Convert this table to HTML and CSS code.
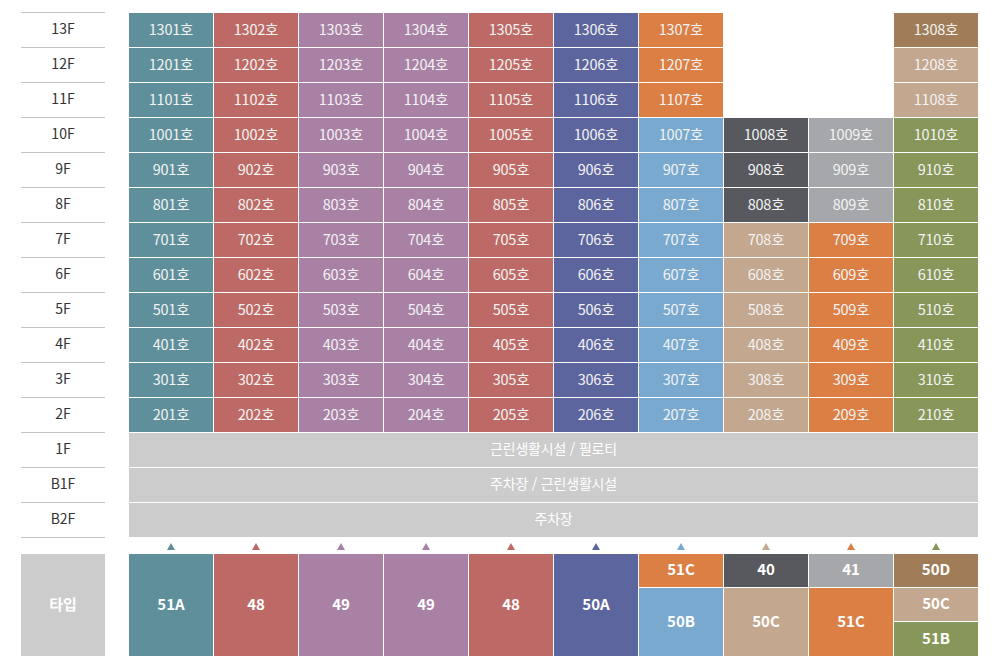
FILE: index.html
```html
<!DOCTYPE html>
<html lang="ko">
<head>
<meta charset="utf-8">
<title>호실 배치도</title>
<link rel="stylesheet" href="styles.css">
</head>
<body>
<div class="page">
  <div class="top">
    <div class="floors">
      <div class="floor">13F</div>
      <div class="floor">12F</div>
      <div class="floor">11F</div>
      <div class="floor">10F</div>
      <div class="floor">9F</div>
      <div class="floor">8F</div>
      <div class="floor">7F</div>
      <div class="floor">6F</div>
      <div class="floor">5F</div>
      <div class="floor">4F</div>
      <div class="floor">3F</div>
      <div class="floor">2F</div>
      <div class="floor">1F</div>
      <div class="floor">B1F</div>
      <div class="floor">B2F</div>
    </div>
    <div class="plan">
      <div class="c teal">1301호</div><div class="c red">1302호</div><div class="c purple">1303호</div><div class="c purple">1304호</div><div class="c red">1305호</div><div class="c navy">1306호</div><div class="c orange">1307호</div><div class="c empty"></div><div class="c brown">1308호</div>
      <div class="c teal">1201호</div><div class="c red">1202호</div><div class="c purple">1203호</div><div class="c purple">1204호</div><div class="c red">1205호</div><div class="c navy">1206호</div><div class="c orange">1207호</div><div class="c empty"></div><div class="c tan">1208호</div>
      <div class="c teal">1101호</div><div class="c red">1102호</div><div class="c purple">1103호</div><div class="c purple">1104호</div><div class="c red">1105호</div><div class="c navy">1106호</div><div class="c orange">1107호</div><div class="c empty"></div><div class="c tan">1108호</div>
      <div class="c teal">1001호</div><div class="c red">1002호</div><div class="c purple">1003호</div><div class="c purple">1004호</div><div class="c red">1005호</div><div class="c navy">1006호</div><div class="c blue">1007호</div><div class="c dark">1008호</div><div class="c light">1009호</div><div class="c olive">1010호</div>
      <div class="c teal">901호</div><div class="c red">902호</div><div class="c purple">903호</div><div class="c purple">904호</div><div class="c red">905호</div><div class="c navy">906호</div><div class="c blue">907호</div><div class="c dark">908호</div><div class="c light">909호</div><div class="c olive">910호</div>
      <div class="c teal">801호</div><div class="c red">802호</div><div class="c purple">803호</div><div class="c purple">804호</div><div class="c red">805호</div><div class="c navy">806호</div><div class="c blue">807호</div><div class="c dark">808호</div><div class="c light">809호</div><div class="c olive">810호</div>
      <div class="c teal">701호</div><div class="c red">702호</div><div class="c purple">703호</div><div class="c purple">704호</div><div class="c red">705호</div><div class="c navy">706호</div><div class="c blue">707호</div><div class="c tan">708호</div><div class="c orange">709호</div><div class="c olive">710호</div>
      <div class="c teal">601호</div><div class="c red">602호</div><div class="c purple">603호</div><div class="c purple">604호</div><div class="c red">605호</div><div class="c navy">606호</div><div class="c blue">607호</div><div class="c tan">608호</div><div class="c orange">609호</div><div class="c olive">610호</div>
      <div class="c teal">501호</div><div class="c red">502호</div><div class="c purple">503호</div><div class="c purple">504호</div><div class="c red">505호</div><div class="c navy">506호</div><div class="c blue">507호</div><div class="c tan">508호</div><div class="c orange">509호</div><div class="c olive">510호</div>
      <div class="c teal">401호</div><div class="c red">402호</div><div class="c purple">403호</div><div class="c purple">404호</div><div class="c red">405호</div><div class="c navy">406호</div><div class="c blue">407호</div><div class="c tan">408호</div><div class="c orange">409호</div><div class="c olive">410호</div>
      <div class="c teal">301호</div><div class="c red">302호</div><div class="c purple">303호</div><div class="c purple">304호</div><div class="c red">305호</div><div class="c navy">306호</div><div class="c blue">307호</div><div class="c tan">308호</div><div class="c orange">309호</div><div class="c olive">310호</div>
      <div class="c teal">201호</div><div class="c red">202호</div><div class="c purple">203호</div><div class="c purple">204호</div><div class="c red">205호</div><div class="c navy">206호</div><div class="c blue">207호</div><div class="c tan">208호</div><div class="c orange">209호</div><div class="c olive">210호</div>
      <div class="c band">근린생활시설 / 필로티</div>
      <div class="c band">주차장 / 근린생활시설</div>
      <div class="c band">주차장</div>
    </div>
  </div>

  <div class="marks">
    <span class="tri t-teal"></span><span class="tri t-red"></span><span class="tri t-purple"></span><span class="tri t-purple"></span><span class="tri t-red"></span><span class="tri t-navy"></span><span class="tri t-blue"></span><span class="tri t-tan"></span><span class="tri t-orange"></span><span class="tri t-olive"></span>
  </div>

  <div class="bottom">
    <div class="type-label">타입</div>
    <div class="types">
      <div class="t full teal">51A</div>
      <div class="t full red">48</div>
      <div class="t full purple">49</div>
      <div class="t full purple">49</div>
      <div class="t full red">48</div>
      <div class="t full navy">50A</div>
      <div class="t one orange col7">51C</div>
      <div class="t two blue col7">50B</div>
      <div class="t one dark col8">40</div>
      <div class="t two tan col8">50C</div>
      <div class="t one light col9">41</div>
      <div class="t two orange col9">51C</div>
      <div class="t one brown col10">50D</div>
      <div class="t one tan col10">50C</div>
      <div class="t one olive col10">51B</div>
    </div>
  </div>
</div>
</body>
</html>
```

FILE: styles.css
```css
* { box-sizing: border-box; }

html, body {
  margin: 0;
  padding: 0;
  background: #ffffff;
}

body {
  font-family: "Noto Sans CJK KR", "Noto Sans", sans-serif;
  width: 998px;
  height: 666px;
  overflow: hidden;
}

.page {
  padding: 12px 0 0 21px;
}

.top {
  display: flex;
  gap: 24px;
}

.floors {
  width: 84px;
  border-top: 1px solid #c4c4c4;
  display: flex;
  flex-direction: column;
}

.floor {
  height: 35px;
  padding-bottom: 4px;
  border-bottom: 1px solid #c4c4c4;
  display: flex;
  align-items: center;
  justify-content: center;
  font-size: 14px;
  color: #333333;
}

.plan {
  margin-top: 1px;
  display: grid;
  grid-template-columns: repeat(10, 84px);
  grid-auto-rows: 34px;
  gap: 1px;
}

.c {
  display: flex;
  align-items: center;
  justify-content: center;
  padding-bottom: 4px;
  color: #f3f3f3;
  font-size: 14.5px;
  letter-spacing: -0.2px;
}

.empty { grid-column: span 2; background: transparent; }
.band { grid-column: 1 / -1; background: #cccccc; color: #ffffff; font-size: 14px; }

.teal { background: #5f8f9b; }
.red { background: #bd6a66; }
.purple { background: #a981a5; }
.navy { background: #5d659f; }
.orange { background: #dc7f45; }
.blue { background: #79a9cf; }
.dark { background: #57595e; }
.light { background: #a6a7ab; }
.tan { background: #c4a78f; }
.brown { background: #a07c59; }
.olive { background: #879659; }

.marks {
  margin-left: 108px;
  height: 16px;
  display: grid;
  grid-template-columns: repeat(10, 84px);
  column-gap: 1px;
  align-items: center;
  justify-items: center;
}

.tri {
  width: 0;
  height: 0;
  border-left: 4px solid transparent;
  border-right: 4px solid transparent;
  border-bottom: 7px solid #999;
}

.t-teal { border-bottom-color: #5f8f9b; }
.t-red { border-bottom-color: #bd6a66; }
.t-purple { border-bottom-color: #a981a5; }
.t-navy { border-bottom-color: #5d659f; }
.t-blue { border-bottom-color: #79a9cf; }
.t-tan { border-bottom-color: #c4a78f; }
.t-orange { border-bottom-color: #dc7f45; }
.t-olive { border-bottom-color: #879659; }

.bottom {
  display: flex;
  gap: 24px;
  height: 102px;
}

.type-label {
  width: 84px;
  background: #cccccc;
  color: #ffffff;
  font-weight: 700;
  font-size: 15px;
  padding-bottom: 4px;
  display: flex;
  align-items: center;
  justify-content: center;
}

.types {
  display: grid;
  grid-template-columns: repeat(10, 84px);
  grid-template-rows: 33px 33px 34px;
  gap: 1px;
}

.t {
  display: flex;
  align-items: center;
  justify-content: center;
  padding-bottom: 4px;
  color: #ffffff;
  font-weight: 700;
  font-size: 15px;
}

.full { grid-row: 1 / 4; }
.col7 { grid-column: 7; }
.col8 { grid-column: 8; }
.col9 { grid-column: 9; }
.col10 { grid-column: 10; }
.one.col7, .one.col8, .one.col9 { grid-row: 1; }
.two { grid-row: 2 / 4; }
```
